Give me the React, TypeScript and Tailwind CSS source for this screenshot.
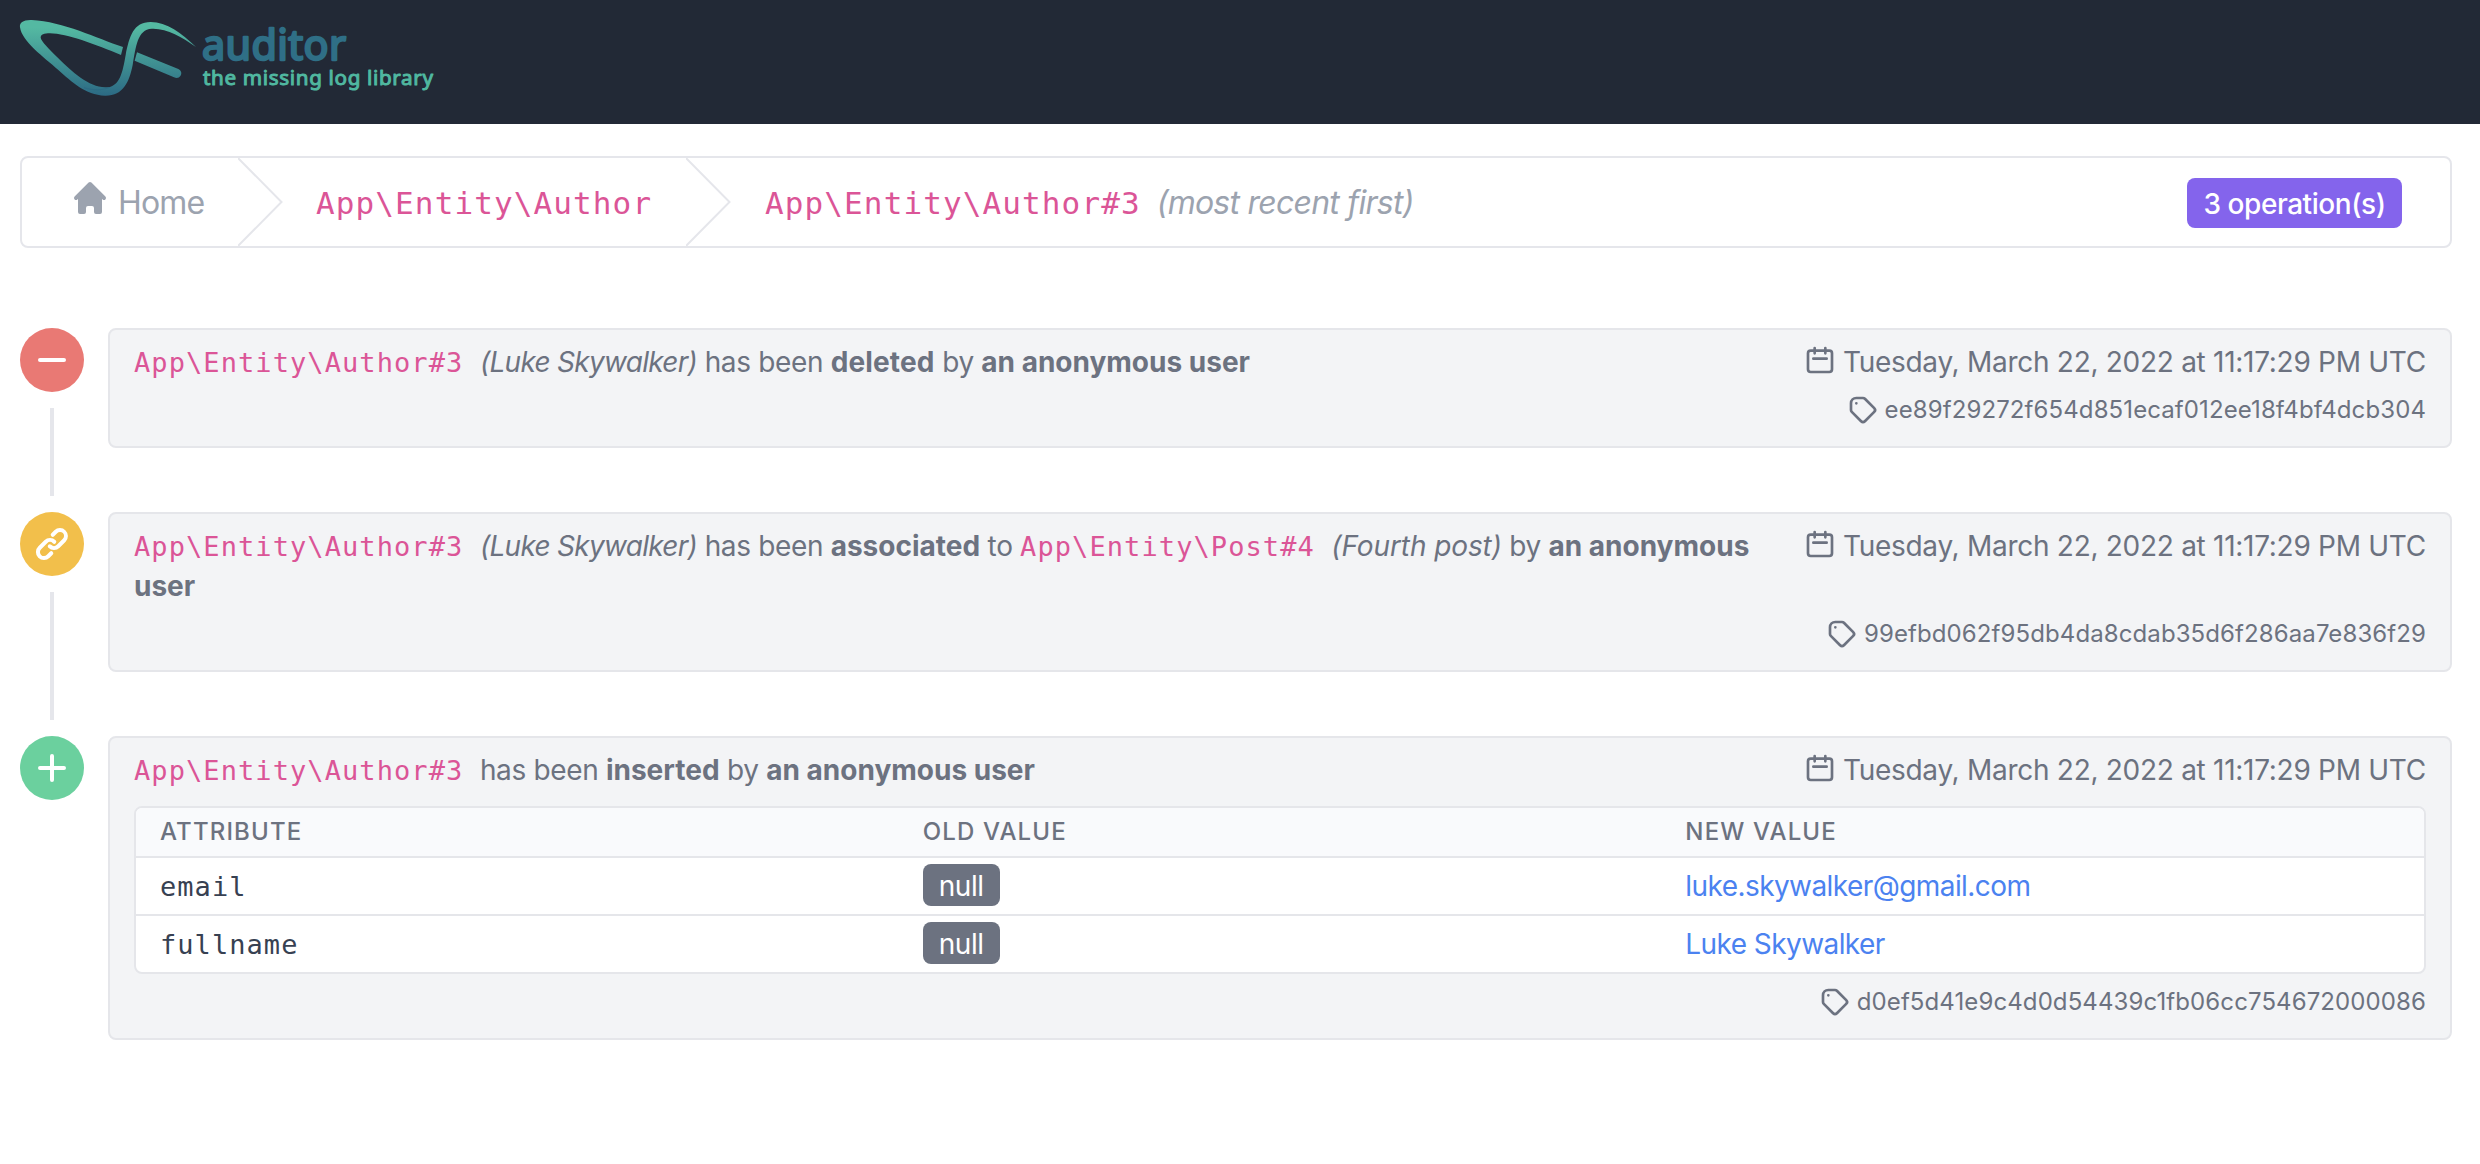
import type { ReactNode } from "react";

function Logo() {
  return (
    <svg className="block h-[124px] w-[460px]" viewBox="0 0 1380 372" aria-label="auditor">
      <defs>
        <linearGradient id="swoosh" gradientUnits="userSpaceOnUse" x1="0" y1="60" x2="0" y2="287">
          <stop offset="0.1" stopColor="#54b9a2" />
          <stop offset="1" stopColor="#2c6a84" />
        </linearGradient>
      </defs>
      <path
        fill="url(#swoosh)"
        d="M369 141 C290 115 190 65 95 60 C70 59 58 68 60 82 C66 125 130 170 175 210 C215 245 255 285 315 287 C370 288 388 245 398 195 C408 140 412 88 455 86 C500 84 545 110 588 141 C545 100 500 66 452 66 C400 66 388 110 377 165 C368 215 360 262 318 262 C270 264 215 215 175 175 C145 145 125 125 122 113 C122 103 132 100 150 100 C200 100 290 135 363 165 Z"
      />
      <path
        fill="url(#swoosh)"
        d="M411 157 L535 207 C545 212 546 222 541 228 C537 234 530 235 522 232 L404 182 Z"
      />
      <path d="M252 263 C280 272 305 271 330 262" fill="none" stroke="#2c6a84" strokeWidth="3" />
      <text
        x="606"
        y="181"
        textLength="432"
        lengthAdjust="spacing"
        fill="#2f6f86"
        stroke="#2f6f86"
        strokeWidth="7"
        strokeLinejoin="round"
        className="font-['Noto_Sans'] text-[124px]"
      >
        auditor
      </text>
      <text
        x="609"
        y="254"
        textLength="690"
        lengthAdjust="spacing"
        fill="#50b8a0"
        stroke="#50b8a0"
        strokeWidth="3"
        strokeLinejoin="round"
        className="font-['Noto_Sans'] text-[62px]"
      >
        the missing log library
      </text>
    </svg>
  );
}

function Solid({ d }: { d: string }) {
  return (
    <svg className="block size-10 shrink-0 fill-current" viewBox="0 0 20 20">
      <path fillRule="evenodd" clipRule="evenodd" d={d} />
    </svg>
  );
}

function Outline({ d }: { d: string }) {
  return (
    <svg
      className="block size-8 shrink-0 fill-none stroke-current"
      viewBox="0 0 24 24"
      strokeWidth="2"
      strokeLinecap="round"
      strokeLinejoin="round"
    >
      <path d={d} />
    </svg>
  );
}

const HOME =
  "M10.707 2.293a1 1 0 00-1.414 0l-7 7a1 1 0 001.414 1.414L4 10.414V17a1 1 0 001 1h2a1 1 0 001-1v-2a1 1 0 011-1h2a1 1 0 011 1v2a1 1 0 001 1h2a1 1 0 001-1v-6.586l.293.293a1 1 0 001.414-1.414l-7-7z";
const MINUS = "M3 10a1 1 0 011-1h12a1 1 0 110 2H4a1 1 0 01-1-1z";
const PLUS =
  "M10 3a1 1 0 011 1v5h5a1 1 0 110 2h-5v5a1 1 0 11-2 0v-5H4a1 1 0 110-2h5V4a1 1 0 011-1z";
const LINK =
  "M12.586 4.586a2 2 0 112.828 2.828l-3 3a2 2 0 01-2.828 0 1 1 0 00-1.414 1.414 4 4 0 005.656 0l3-3a4 4 0 00-5.656-5.656l-1.5 1.5a1 1 0 101.414 1.414l1.5-1.5zm-5 5a2 2 0 012.828 0 1 1 0 101.414-1.414 4 4 0 00-5.656 0l-3 3a4 4 0 105.656 5.656l1.5-1.5a1 1 0 10-1.414-1.414l-1.5 1.5a2 2 0 11-2.828-2.828l3-3z";
const CALENDAR =
  "M8 7V3m8 4V3m-9 8h10M5 21h14a2 2 0 002-2V7a2 2 0 00-2-2H5a2 2 0 00-2 2v12a2 2 0 002 2z";
const TAG =
  "M7 7h.01M7 3h5c.512 0 1.024.195 1.414.586l7 7a2 2 0 010 2.828l-7 7a2 2 0 01-2.828 0l-7-7A1.994 1.994 0 013 12V7a4 4 0 014-4z";

function Chevron() {
  return (
    <svg className="block h-[88px] w-[46px] shrink-0 fill-none stroke-[#e5e6eb]" viewBox="0 0 46 88">
      <path d="M-1 -1L43.5 44L-1 89" strokeWidth="2" />
    </svg>
  );
}

function Entity({ children }: { children: ReactNode }) {
  return (
    <span className="mr-[9px] font-['DejaVu_Sans_Mono',monospace] text-[27px] leading-none tracking-[1.08px] text-[#db5597]">
      {children}
    </span>
  );
}

function Event({
  color,
  icon,
  summary,
  hash,
  last,
  children,
}: {
  color: string;
  icon: string;
  summary: ReactNode;
  hash: string;
  last?: boolean;
  children?: ReactNode;
}) {
  return (
    <li className="flex gap-6">
      <div className="flex w-16 shrink-0 flex-col items-center">
        <div className={`flex size-16 items-center justify-center rounded-full text-white ${color}`}>
          <Solid d={icon} />
        </div>
        {!last && <div className="my-4 w-1 flex-1 bg-[#e5e6eb]" />}
      </div>
      <div className={`min-w-0 flex-1 ${last ? "" : "pb-16"}`}>
        <article className="rounded-lg border-2 border-[#e5e6ea] bg-[#f3f4f6] px-6 pt-3 pb-5 text-[28px] leading-10 text-[#6c7280]">
          <header className="flex gap-8">
            <p className="flex-1 tracking-[-0.35px]">{summary}</p>
            <div className="flex h-10 items-start gap-[7px] whitespace-nowrap">
              <div className="mt-0.5">
                <Outline d={CALENDAR} />
              </div>
              <span className="tracking-[-0.28px]">Tuesday, March 22, 2022 at 11:17:29 PM UTC</span>
            </div>
          </header>
          {children}
          <footer className="mt-3 flex items-center justify-end gap-1.5 text-2xl leading-8 tracking-[0.1px]">
            <Outline d={TAG} />
            {hash}
          </footer>
        </article>
      </div>
    </li>
  );
}

const rows = [
  { attribute: "email", value: "luke.skywalker@gmail.com" },
  { attribute: "fullname", value: "Luke Skywalker" },
];

function Diff() {
  return (
    <div className="mt-4 overflow-hidden rounded-lg border-2 border-[#e5e6ea] bg-white">
      <div className="grid h-12 grid-cols-3 items-center bg-[#f9fafc] text-2xl font-medium tracking-[1.15px] uppercase">
        <span className="px-6">Attribute</span>
        <span className="px-6">Old value</span>
        <span className="px-6">New value</span>
      </div>
      {rows.map((row) => (
        <div key={row.attribute} className="grid h-[58px] grid-cols-3 items-center border-t-2 border-[#e5e6ea]">
          <span className="px-6 pt-px font-['DejaVu_Sans_Mono',monospace] text-[27px] tracking-[1.05px] text-[#374152]">
            {row.attribute}
          </span>
          <div className="px-6">
            <span className="mb-0.5 block h-[42px] w-[77px] rounded-lg bg-[#6c7280] text-center leading-[44px] tracking-[-0.4px] text-white">
              null
            </span>
          </div>
          <span className="px-6 tracking-[-0.57px] text-[#4b82f0]">{row.value}</span>
        </div>
      ))}
    </div>
  );
}

export default function App() {
  return (
    <div className="min-h-[1164px] bg-white font-['Inter',sans-serif]">
      <header className="h-[124px] bg-[#222936]">
        <Logo />
      </header>
      <main className="pt-8 pr-7 pl-5">
        <nav className="flex h-[92px] items-center rounded-lg border-2 border-[#e5e6eb] pr-12 pl-12 text-[32px] leading-[48px] text-[#9ca3af]">
          <a className="flex w-[168px] items-center gap-2">
            <div className="-mt-2">
              <Solid d={HOME} />
            </div>
            <span className="pt-px tracking-[-0.8px]">Home</span>
          </a>
          <Chevron />
          <a className="ml-8 w-[370px] pt-px font-['DejaVu_Sans_Mono',monospace] text-[31px] tracking-[1.11px] text-[#db5597]">
            App\Entity\Author
          </a>
          <Chevron />
          <div className="ml-[33px] flex flex-1 items-baseline gap-4 pt-px">
            <span className="font-['DejaVu_Sans_Mono',monospace] text-[31px] tracking-[1.11px] text-[#db5597]">
              App\Entity\Author#3
            </span>
            <em className="tracking-[-0.75px]">(most recent first)</em>
          </div>
          <span className="mt-0.5 h-[50px] w-[215px] rounded-lg bg-[#8464ec] text-center text-[28px] leading-[52px] font-medium tracking-[-0.45px] text-white">
            3 operation(s)
          </span>
        </nav>
        <ul className="mt-20">
          <Event
            color="bg-[#e97974]"
            icon={MINUS}
            hash="ee89f29272f654d851ecaf012ee18f4bf4dcb304"
            summary={
              <>
                <Entity>App\Entity\Author#3</Entity> <em className="tracking-[-0.7px]">(Luke Skywalker)</em> has been{" "}
                <b className="tracking-[0.15px]">deleted</b> by <b className="tracking-normal">an anonymous user</b>
              </>
            }
          />
          <Event
            color="bg-[#f2bf4b]"
            icon={LINK}
            hash="99efbd062f95db4da8cdab35d6f286aa7e836f29"
            summary={
              <>
                <Entity>App\Entity\Author#3</Entity> <em className="tracking-[-0.7px]">(Luke Skywalker)</em> has been{" "}
                <b className="tracking-normal">associated</b> to <Entity>App\Entity\Post#4</Entity>{" "}
                <em className="tracking-[-0.1px]">(Fourth post)</em> by{" "}
                <b className="tracking-normal">an anonymous user</b>
              </>
            }
          />
          <Event
            color="bg-[#6bd09e]"
            icon={PLUS}
            hash="d0ef5d41e9c4d0d54439c1fb06cc754672000086"
            last
            summary={
              <>
                <Entity>App\Entity\Author#3</Entity> has been <b className="tracking-normal">inserted</b> by{" "}
                <b className="tracking-normal">an anonymous user</b>
              </>
            }
          >
            <Diff />
          </Event>
        </ul>
      </main>
    </div>
  );
}
